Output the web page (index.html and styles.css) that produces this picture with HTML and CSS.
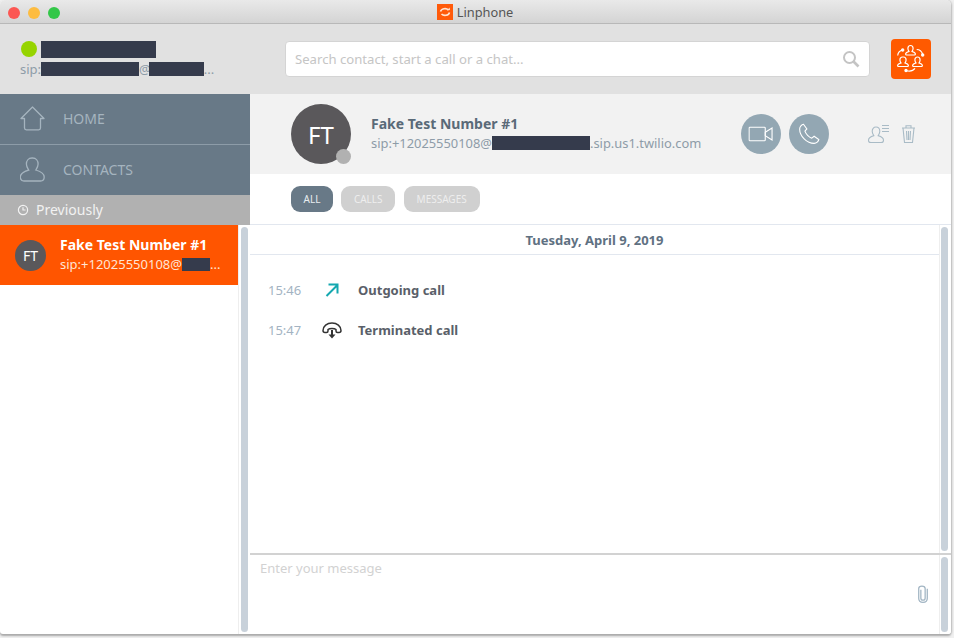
FILE: index.html
```html
<!DOCTYPE html>
<html lang="en">
<head>
    <meta charset="UTF-8">
    <title>Linphone</title>
    <link rel="stylesheet" href="styles.css">
</head>
<body>
<div class="window">
    <div class="titlebar">
        <div class="lights">
            <span class="light red"></span>
            <span class="light yellow"></span>
            <span class="light green"></span>
        </div>
        <div class="app-title">
            <svg class="app-logo" width="16" height="16" viewBox="0 0 16 16">
                <rect width="16" height="16" fill="#ff5a0a"/>
                <path d="M3.5 7.5a4.5 3.5 0 0 1 8-1.5M12.5 8.5a4.500 3.5 0 0 1-8 1.500" fill="none" stroke="#ffe3d2" stroke-width="1.600"/>
                <path d="M10 6.500l3-.5-.5-2.500z" fill="#ffe3d2"/>
            </svg>
            <span>Linphone</span>
        </div>
    </div>

    <div class="topbar">
        <div class="account">
            <div class="account-name">
                <span class="presence"></span>
                <span class="redact redact-name"></span>
            </div>
            <div class="account-sip">sip:<span class="redact redact-user"></span>@<span class="redact redact-host"></span>...</div>
        </div>
        <div class="search">
            <span>Search contact, start a call or a chat...</span>
            <svg width="18" height="18" viewBox="0 0 18 18" fill="none" stroke="#c4c4c4">
                <circle cx="7.500" cy="7.500" r="5.500" stroke-width="2"/>
                <path d="M11.500 11.500l5 5" stroke-width="2.600"/>
            </svg>
        </div>
        <button class="conf-btn">
            <svg width="30" height="30" viewBox="0 0 30 30" fill="none" stroke="#fff" stroke-width="1.200">
                <path d="M14.500 1.500c1.700 0 2.600 1.300 2.600 3 0 1.300-.6 2.200-1.100 3 1.800.5 3.400 1.100 3.400 2.500 0 .6-.4 1-1 1h-7.800c-.6 0-1-.4-1-1 0-1.400 1.600-2 3.400-2.500-.5-.8-1.100-1.700-1.100-3 0-1.700.9-3 2.600-3z"/>
                <path d="M7.500 13c1.700 0 2.600 1.300 2.600 3 0 1.300-.6 2.200-1.100 3 1.800.5 3.400 1.100 3.400 2.500 0 .6-.4 1-1 1H2.600c-.6 0-1-.4-1-1 0-1.400 1.600-2 3.400-2.500-.5-.8-1.100-1.700-1.100-3 0-1.700.9-3 2.600-3z"/>
                <path d="M21.500 13c1.700 0 2.600 1.300 2.600 3 0 1.300-.6 2.200-1.100 3 1.800.5 3.400 1.100 3.400 2.500 0 .6-.4 1-1 1h-7.800c-.6 0-1-.4-1-1 0-1.400 1.600-2 3.400-2.500-.5-.8-1.100-1.700-1.100-3 0-1.700.9-3 2.600-3z"/>
                <path d="M1.700 11.500c.2-2.500 1.800-4.800 5-5.500M20.700 5.500c2.800 0 5 1.800 6 5M10 26.500c3.500 1 7 .5 9-2.200"/>
                <circle cx="6.700" cy="6" r="1.100" fill="#fff"/>
                <circle cx="26.700" cy="11" r="1.100" fill="#fff"/>
                <circle cx="10" cy="26.500" r="1.100" fill="#fff"/>
            </svg>
        </button>
    </div>

    <div class="main">
        <div class="sidebar">
            <div class="nav-item">
                <svg width="25" height="25" viewBox="0 0 25 25" fill="none" stroke="#a5b4bf" stroke-width="1.300" stroke-linejoin="round">
                    <path d="M1 12.500L12.500 1 24 12.500h-3.500V22c0 1-.6 1.800-1.800 1.800H6.300C5.100 23.800 4.500 23 4.500 22v-9.500z"/>
                </svg>
                <span>HOME</span>
            </div>
            <div class="nav-item">
                <svg width="25" height="25" viewBox="0 0 25 25" fill="none" stroke="#a5b4bf" stroke-width="1.300">
                    <path d="M12.500 1c3.700 0 5.600 2.800 5.600 6 0 2.800-1.400 4.600-2.300 6 4.200 1.200 8.400 3.100 8.400 7 0 2.300-1.600 4-3.700 4H4c-2.100 0-3.700-1.700-3.700-4 0-3.900 4.200-5.800 8.400-7-.9-1.400-2.300-3.200-2.300-6 0-3.200 1.900-6 5.600-6z"/>
                </svg>
                <span>CONTACTS</span>
            </div>
            <div class="section-head">
                <svg width="12" height="12" viewBox="0 0 12 12" fill="none" stroke="#f2f2f2" stroke-width="1.200">
                    <circle cx="6" cy="6" r="4.600"/>
                    <path d="M6 3.200V6h2.500"/>
                </svg>
                <span>Previously</span>
            </div>
            <div class="list">
                <div class="list-items">
                    <div class="contact-row">
                        <div class="avatar small">FT</div>
                        <div class="contact-text">
                            <div class="contact-name">Fake Test Number #1</div>
                            <div class="contact-sip">sip:+12025550108@<span class="redact redact-row"></span>...</div>
                        </div>
                    </div>
                </div>
                <div class="scrollbar"><div class="thumb"></div></div>
            </div>
        </div>

        <div class="content">
            <div class="contact-head">
                <div class="avatar large">FT<span class="status-dot"></span></div>
                <div class="head-text">
                    <div class="head-name">Fake Test Number #1</div>
                    <div class="head-sip">sip:+12025550108@<span class="redact redact-head"></span>.sip.us1.twilio.com</div>
                </div>
                <div class="call-btns">
                    <div class="round-btn">
                        <svg width="30" height="22" viewBox="0 0 30 22" fill="none" stroke="#fff" stroke-width="1.300">
                            <rect x="1" y="3" width="19" height="16" rx="1"/>
                            <path d="M20 9l8-5v14l-8-5z"/>
                        </svg>
                    </div>
                    <div class="round-btn">
                        <svg width="26" height="26" viewBox="0 0 26 26" fill="none" stroke="#fff" stroke-width="1.300">
                            <path d="M6.500 1.500l4 5.500-2.300 2.600c1 3.300 4.700 7.200 8 8.300l2.800-2.300 5.500 4c-.3 2-2.700 4.400-5.500 4.400C10.500 24 2 15.500 2 7c0-2.800 2.500-5.200 4.500-5.500z"/>
                        </svg>
                    </div>
                </div>
                <div class="small-icons">
                    <svg width="23" height="20" viewBox="0 0 23 20" fill="none" stroke="#a9bbc6" stroke-width="1.100">
                        <path d="M9 3c2.500 0 3.800 2 3.800 4.300 0 2-1 3.300-1.600 4.300 2.600.8 5.300 2 5.300 4.600 0 1.300-.8 2.300-2.300 2.300H3.800C2.300 18.500 1.500 17.500 1.500 16.200c0-2.600 2.700-3.800 5.300-4.600C6.200 10.600 5.200 9.300 5.200 7.300 5.200 5 6.500 3 9 3z"/>
                        <path d="M15 1.500h7M15 4.500h7M15 7.500h7"/>
                    </svg>
                    <svg width="15" height="20" viewBox="0 0 15 20" fill="none" stroke="#a9bbc6" stroke-width="1.100">
                        <path d="M1 4h13M5 4V1.800h5V4M2 4l1.500 14.500h8L13 4M5.500 7l.5 9M7.500 7v9M9.500 7l-.5 9"/>
                    </svg>
                </div>
            </div>
            <div class="filters">
                <span class="pill active">ALL</span>
                <span class="pill">CALLS</span>
                <span class="pill">MESSAGES</span>
            </div>
            <div class="history">
                <div class="history-list">
                    <div class="date-row">Tuesday, April 9, 2019</div>
                    <div class="events">
                        <div class="event">
                            <span class="event-time">15:46</span>
                            <span class="event-icon">
                                <svg width="14" height="14" viewBox="0 0 14 14" fill="none" stroke="#15a8b0" stroke-width="2">
                                    <path d="M1.500 13L12 2.500M3.500 1.500H12.500V10.500"/>
                                </svg>
                            </span>
                            <span class="event-label">Outgoing call</span>
                        </div>
                        <div class="event">
                            <span class="event-time">15:47</span>
                            <span class="event-icon">
                                <svg width="20" height="17" viewBox="0 0 20 17" fill="none" stroke="#333" stroke-width="1.500">
                                    <path d="M4.500 10.500H3C1.800 10.500 1 9.700 1 8.500 1 4 5 1 10 1s9 3 9 7.500c0 1.200-.8 2-2 2h-1.500c-1 0-1.500-.7-1.500-1.500V7.500C12.500 6 7.500 6 6 7.500V9c0 .8-.5 1.500-1.500 1.500z"/>
                                    <path d="M10 8v5" stroke-width="2"/>
                                    <path d="M6.500 12.500h7L10 16.500z" fill="#333" stroke="none"/>
                                </svg>
                            </span>
                            <span class="event-label">Terminated call</span>
                        </div>
                    </div>
                </div>
                <div class="scrollbar"><div class="thumb"></div></div>
            </div>
            <div class="composer">
                <div class="composer-box">
                    <div class="placeholder">Enter your message</div>
                    <svg class="clip" width="12" height="20" viewBox="0 0 14 22" fill="none" stroke="#a3b6c4" stroke-width="1.500">
                        <path d="M4.500 6v10c0 3 5 3 5 0V4.500C9.500 1 2 1 2 4.500V16c0 6.500 10 6.500 10 0V5"/>
                    </svg>
                </div>
                <div class="scrollbar"><div class="thumb"></div></div>
            </div>
        </div>
    </div>
</div>
</body>
</html>
```

FILE: styles.css
```css
html, body {
    margin: 0;
    padding: 0;
    height: 100%;
    overflow: hidden;
}
body {
    font-family: "Noto Sans", "Open Sans", sans-serif;
    background-color: #f0f0f0;
}
.window {
    width: 951px;
    height: 634px;
    display: flex;
    flex-direction: column;
    background-color: #fff;
    border-radius: 5px 5px 3px 3px;
    overflow: hidden;
    box-shadow: 0 2px 2px #aaa, 1px 0 2px #c4c4c4;
}
.titlebar {
    height: 24px;
    flex: none;
    position: relative;
    display: flex;
    align-items: center;
    justify-content: center;
    background: linear-gradient(#e9e9e9, #d4d4d4);
    border-bottom: 1px solid #b8b8b8;
    box-sizing: border-box;
}
.lights {
    position: absolute;
    left: 8px;
    top: 7px;
    display: flex;
    gap: 8px;
}
.light {
    width: 12px;
    height: 12px;
    border-radius: 50%;
}
.red { background-color: #fc5753; }
.yellow { background-color: #fdbc40; }
.green { background-color: #33c748; }
.app-title {
    display: flex;
    align-items: center;
    gap: 4px;
    margin-left: -1px;
    font-size: 12.800px;
    color: #555;
}
.app-logo { display: block; }

.topbar {
    height: 70px;
    flex: none;
    display: flex;
    align-items: center;
    background-color: #e1e1e1;
    padding: 0 20px;
    box-sizing: border-box;
}
.account {
    width: 265px;
    flex: none;
}
.account-name {
    display: flex;
    align-items: center;
    gap: 4px;
    height: 18px;
}
.presence {
    width: 16px;
    height: 16px;
    margin-left: 1px;
    border-radius: 50%;
    background-color: #96d400;
}
.redact {
    display: inline-block;
    background-color: #353b4c;
}
.redact-name { width: 115px; height: 17px; }
.account-sip {
    font-size: 13px;
    line-height: 18px;
    margin-top: 2px;
    color: #8e9ca8;
    white-space: nowrap;
}
.redact-user { width: 98px; height: 14px; vertical-align: -2px; }
.redact-host { width: 55px; height: 14px; vertical-align: -2px; margin-left: -2px; }
.search {
    flex: 1;
    height: 36px;
    display: flex;
    align-items: center;
    justify-content: space-between;
    background-color: #fff;
    border: 1px solid #d4d4d4;
    border-radius: 4px;
    padding: 0 9px;
    box-sizing: border-box;
    font-size: 13.130px;
    color: #c5c5c5;
}
.conf-btn {
    width: 40px;
    height: 40px;
    margin-left: 21px;
    padding: 0;
    border: none;
    border-radius: 4px;
    background-color: #ff5a00;
    display: flex;
    align-items: center;
    justify-content: center;
}

.main {
    flex: 1;
    display: flex;
    min-height: 0;
}
.sidebar {
    width: 250px;
    flex: none;
    display: flex;
    flex-direction: column;
}
.nav-item {
    height: 51px;
    flex: none;
    display: flex;
    align-items: center;
    gap: 18px;
    padding: 0 0 1px 20px;
    box-sizing: border-box;
    background-color: #687987;
    border-bottom: 1px solid #8d9ca8;
    font-size: 14px;
    color: #a5b4bf;
}
.nav-item:nth-child(2) {
    height: 50px;
    border-bottom: none;
}
.section-head {
    height: 30px;
    flex: none;
    display: flex;
    align-items: center;
    gap: 7px;
    padding-left: 17px;
    background-color: #b1b1b1;
    font-size: 14px;
    color: #f2f2f2;
}
.section-head span { margin-bottom: 1px; }
.list {
    flex: 1;
    display: flex;
    min-height: 0;
}
.list-items { flex: 1; }
.contact-row {
    height: 60px;
    display: flex;
    align-items: center;
    gap: 14px;
    padding-left: 15px;
    background-color: #ff5500;
    color: #fff;
}
.contact-text { margin-bottom: 2px; }
.avatar {
    border-radius: 50%;
    background-color: #5a585b;
    color: #fff;
    display: flex;
    align-items: center;
    justify-content: center;
    flex: none;
}
.avatar.small {
    width: 31px;
    height: 31px;
    font-size: 14px;
}
.avatar.large {
    width: 60px;
    height: 60px;
    font-size: 24px;
    position: relative;
}
.status-dot {
    position: absolute;
    right: 0;
    bottom: 0;
    width: 15px;
    height: 15px;
    border-radius: 50%;
    background-color: #b1b1b1;
}
.contact-name {
    font-size: 14px;
    font-weight: 700;
    line-height: 20px;
}
.contact-sip {
    font-size: 13px;
    line-height: 18px;
    color: #ffe4d4;
    white-space: nowrap;
}
.redact-row { width: 28px; height: 13px; vertical-align: -2px; }
.scrollbar {
    width: 12px;
    flex: none;
    background-color: #fff;
    display: flex;
    padding: 2px;
    box-sizing: border-box;
    border-left: 1px solid #eee;
}
.content .scrollbar {
    padding-left: 1px;
    padding-right: 3px;
}
.thumb {
    flex: 1;
    background-color: #c8d1da;
    border-radius: 5px;
}

.content {
    flex: 1;
    min-width: 0;
    display: flex;
    flex-direction: column;
}
.contact-head {
    height: 80px;
    flex: none;
    display: flex;
    align-items: center;
    padding-left: 41px;
    background-color: #f2f2f2;
}
.head-text {
    width: 370px;
    margin-left: 20px;
    margin-bottom: 2px;
    flex: none;
}
.head-name {
    font-size: 14px;
    font-weight: 700;
    line-height: 20px;
    color: #5a6a78;
}
.head-sip {
    font-size: 12.900px;
    line-height: 18px;
    color: #8e9ca8;
    white-space: nowrap;
}
.redact-head { width: 98px; height: 14px; vertical-align: -2px; }
.call-btns {
    display: flex;
    gap: 8px;
}
.round-btn {
    width: 40px;
    height: 40px;
    border-radius: 50%;
    background-color: #93a7b3;
    display: flex;
    align-items: center;
    justify-content: center;
}
.round-btn svg { transform: scale(0.85); }
.small-icons {
    display: flex;
    align-items: center;
    gap: 11px;
    margin-left: 38px;
}
.filters {
    height: 51px;
    flex: none;
    display: flex;
    align-items: flex-start;
    gap: 8.500px;
    padding: 12px 0 0 41px;
    background-color: #fff;
    border-bottom: 1px solid #e2e7ef;
    box-sizing: border-box;
}
.pill {
    height: 26px;
    display: flex;
    align-items: center;
    padding: 0 12.500px;
    border-radius: 9px;
    background-color: #d0d0d0;
    color: #eee;
    font-size: 10px;
}
.pill:last-child { padding: 0 13px; }
.pill.active {
    background-color: #687987;
    color: #e8edf0;
}
.history {
    flex: 1;
    min-height: 0;
    display: flex;
}
.history-list {
    flex: 1;
    min-width: 0;
}
.date-row {
    height: 30px;
    display: flex;
    align-items: center;
    justify-content: center;
    font-size: 13px;
    font-weight: 700;
    color: #5f7182;
    border-bottom: 1px solid #e2e7ef;
    box-sizing: border-box;
}
.events { padding-top: 15px; }
.event {
    height: 40px;
    display: flex;
    align-items: center;
    padding-left: 18px;
    font-size: 13px;
}
.event-time {
    width: 48px;
    color: #a3b3c2;
}
.event-icon {
    width: 42px;
    display: flex;
    justify-content: flex-start;
    padding-left: 9px;
    box-sizing: border-box;
}
.event:last-child .event-icon { padding-left: 6px; }
.event-label {
    font-weight: 700;
    color: #5a5f69;
}
.composer {
    height: 81px;
    flex: none;
    display: flex;
    border-top: 2px solid #d2d2d2;
    box-sizing: border-box;
}
.composer-box {
    flex: 1;
    position: relative;
    padding: 4px 10px;
    font-size: 13px;
    color: #d2d2d2;
}
.clip {
    position: absolute;
    right: 10px;
    top: 29px;
}
```
